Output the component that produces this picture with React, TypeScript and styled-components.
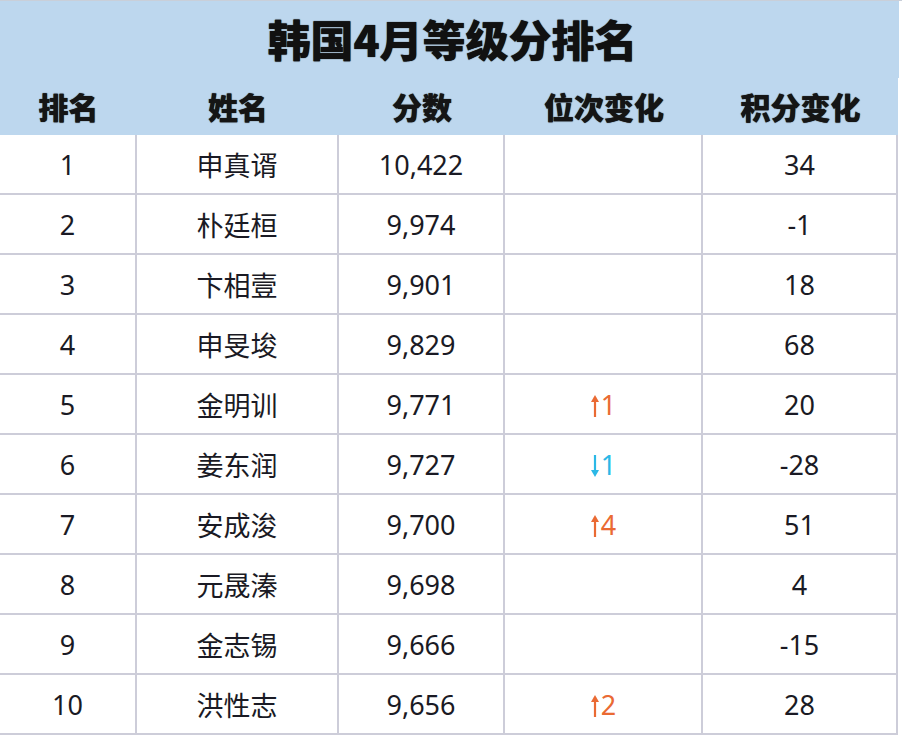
import React from "react";
import styled, { createGlobalStyle } from "styled-components";

const Global = createGlobalStyle`
  html, body { margin: 0; padding: 0; background: #ffffff; }
  body { font-family: "Noto Sans", "Noto Sans CJK SC", sans-serif; }
`;

const Sheet = styled.div`
  width: 902px;
  height: 738px;
  background: #ffffff;
  box-sizing: border-box;
  border-top: 1px solid #c9cfd9;
`;

const Title = styled.div`
  width: 899px;
  height: 77px;
  background: #bdd7ee;
  display: flex;
  align-items: center;
  justify-content: center;
  font-family: "Noto Sans CJK SC", sans-serif;
  font-weight: 900;
  font-size: 43px;
  color: #111;
  padding-left: 6px;
  padding-bottom: 4px;
  box-sizing: border-box;
  text-shadow: 0 0 1px #000;
`;

const Grid = styled.div`
  display: grid;
  grid-template-columns: 137px 202px 166px 198px 195px;
  width: 898px;
`;

const HeadCell = styled.div`
  height: 57px;
  background: #bdd7ee;
  display: flex;
  align-items: center;
  justify-content: center;
  font-family: "Noto Sans CJK SC", sans-serif;
  font-weight: 900;
  font-size: 30px;
  color: #151515;
  padding-bottom: 1px;
  box-sizing: border-box;
  text-shadow: 0 0 1px #000;
`;

const Cell = styled.div`
  height: 60px;
  box-sizing: border-box;
  border-bottom: 2px solid #cdcdd9;
  border-right: 2px solid #cdcdd9;
  display: flex;
  align-items: center;
  justify-content: center;
  font-family: "Noto Sans", "Noto Sans CJK SC", sans-serif;
  font-size: 27px;
  color: #1a1a24;
  padding-top: 1px;
`;

const Change = styled.span<{ $up: boolean }>`
  color: ${(p) => (p.$up ? "#ea6a33" : "#2bb8e6")};
  display: inline-flex;
  align-items: center;
  gap: 1px;
`;

const Arrow = ({ up }: { up: boolean }) => (
  <svg width="10" height="26" viewBox="0 0 10 26" style={{ marginTop: 2 }}>
    {up ? (
      <>
        <path d="M5 4 L5 24" stroke="currentColor" strokeWidth="2.2" />
        <path d="M1 9 L5 2 L9 9 Z" fill="currentColor" />
      </>
    ) : (
      <>
        <path d="M5 2 L5 21" stroke="currentColor" strokeWidth="2.2" />
        <path d="M1 17 L5 24 L9 17 Z" fill="currentColor" />
      </>
    )}
  </svg>
);

type Row = { rank: number; name: string; score: string; change?: [boolean, number]; delta: string };

const rows: Row[] = [
  { rank: 1, name: "申真谞", score: "10,422", delta: "34" },
  { rank: 2, name: "朴廷桓", score: "9,974", delta: "-1" },
  { rank: 3, name: "卞相壹", score: "9,901", delta: "18" },
  { rank: 4, name: "申旻埈", score: "9,829", delta: "68" },
  { rank: 5, name: "金明训", score: "9,771", change: [true, 1], delta: "20" },
  { rank: 6, name: "姜东润", score: "9,727", change: [false, 1], delta: "-28" },
  { rank: 7, name: "安成浚", score: "9,700", change: [true, 4], delta: "51" },
  { rank: 8, name: "元晟溱", score: "9,698", delta: "4" },
  { rank: 9, name: "金志锡", score: "9,666", delta: "-15" },
  { rank: 10, name: "洪性志", score: "9,656", change: [true, 2], delta: "28" },
];

const headers = ["排名", "姓名", "分数", "位次变化", "积分变化"];

export default function App() {
  return (
    <>
      <Global />
      <Sheet>
        <Title>韩国4月等级分排名</Title>
        <Grid>
          {headers.map((h) => (
            <HeadCell key={h}>{h}</HeadCell>
          ))}
          {rows.map((r) => (
            <React.Fragment key={r.rank}>
              <Cell>{r.rank}</Cell>
              <Cell>{r.name}</Cell>
              <Cell>{r.score}</Cell>
              <Cell>
                {r.change && (
                  <Change $up={r.change[0]}>
                    <Arrow up={r.change[0]} />
                    {r.change[1]}
                  </Change>
                )}
              </Cell>
              <Cell>{r.delta}</Cell>
            </React.Fragment>
          ))}
        </Grid>
      </Sheet>
    </>
  );
}
